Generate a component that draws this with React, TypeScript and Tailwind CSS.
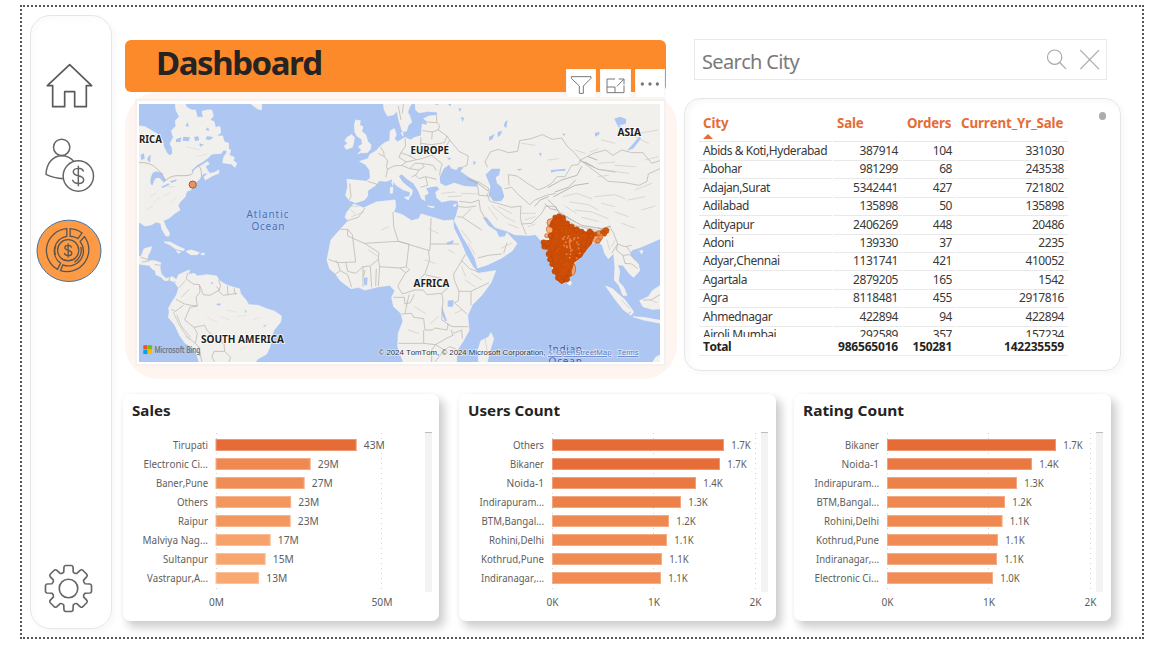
import React from "react";

type Bar = { label: string; value: string; width: number; color: string };
type Tick = { label: string; x: number };

const salesBars: Bar[] = [
  { label: "Tirupati", value: "43M", width: 141, color: "#e66c37" },
  { label: "Electronic Ci...", value: "29M", width: 95, color: "#ef8951" },
  { label: "Baner,Pune", value: "27M", width: 89, color: "#f08d55" },
  { label: "Others", value: "23M", width: 75.5, color: "#f3965f" },
  { label: "Raipur", value: "23M", width: 75, color: "#f3965f" },
  { label: "Malviya Nag...", value: "17M", width: 55, color: "#f7a26b" },
  { label: "Sultanpur", value: "15M", width: 50, color: "#f8a56e" },
  { label: "Vastrapur,A...", value: "13M", width: 43.5, color: "#f9a872" },
];

const userBars: Bar[] = [
  { label: "Others", value: "1.7K", width: 172, color: "#e66c37" },
  { label: "Bikaner", value: "1.7K", width: 168, color: "#e76e39" },
  { label: "Noida-1", value: "1.4K", width: 144, color: "#ea7943" },
  { label: "Indirapuram...", value: "1.3K", width: 129, color: "#ed814a" },
  { label: "BTM,Bangal...", value: "1.2K", width: 117, color: "#ef8850" },
  { label: "Rohini,Delhi", value: "1.1K", width: 115, color: "#ef8951" },
  { label: "Kothrud,Pune", value: "1.1K", width: 110, color: "#f08b54" },
  { label: "Indiranagar,...", value: "1.1K", width: 109, color: "#f08c54" },
];

const ratingBars: Bar[] = [
  { label: "Bikaner", value: "1.7K", width: 169, color: "#e66c37" },
  { label: "Noida-1", value: "1.4K", width: 145, color: "#ea7842" },
  { label: "Indirapuram...", value: "1.3K", width: 130, color: "#ed814a" },
  { label: "BTM,Bangal...", value: "1.2K", width: 118, color: "#ef8750" },
  { label: "Rohini,Delhi", value: "1.1K", width: 115.5, color: "#ef8951" },
  { label: "Kothrud,Pune", value: "1.1K", width: 111, color: "#f08b53" },
  { label: "Indiranagar,...", value: "1.1K", width: 110, color: "#f08b54" },
  { label: "Electronic Ci...", value: "1.0K", width: 106, color: "#f08d56" },
];

const labelWidths: Record<string, number> = {
  Tirupati: 35,
  "Electronic Ci...": 64.5,
  "Baner,Pune": 52,
  Others: 31,
  Raipur: 30,
  "Malviya Nag...": 65.5,
  Sultanpur: 45,
  "Vastrapur,A...": 61,
  Bikaner: 34,
  "Noida-1": 37.5,
  "Indirapuram...": 64.5,
  "BTM,Bangal...": 62.5,
  "Rohini,Delhi": 55,
  "Kothrud,Pune": 63,
  "Indiranagar,...": 63,
};

const rows = [
  ["Abids & Koti,Hyderabad", "387914", "104", "331030"],
  ["Abohar", "981299", "68", "243538"],
  ["Adajan,Surat", "5342441", "427", "721802"],
  ["Adilabad", "135898", "50", "135898"],
  ["Adityapur", "2406269", "448", "20486"],
  ["Adoni", "139330", "37", "2235"],
  ["Adyar,Chennai", "1131741", "421", "410052"],
  ["Agartala", "2879205", "165", "1542"],
  ["Agra", "8118481", "455", "2917816"],
  ["Ahmednagar", "422894", "94", "422894"],
  ["Airoli,Mumbai", "292589", "357", "157234"],
];

function HomeIcon() {
  return (
    <svg viewBox="90 183 147 141" className="h-[47px] w-[49px]" fill="none" stroke="#58595b" strokeWidth="5">
      <path d="M164 191 230 254H214V317H179V272H149V317H113V254H97Z" strokeLinejoin="round" />
    </svg>
  );
}

function CustomerIcon() {
  return (
    <svg viewBox="90 414 153 165" className="h-[55px] w-[51px]" fill="none" stroke="#666" strokeWidth="4.5">
      <circle cx="143" cy="442" r="24.5" />
      <path d="M149 536C128 535 112 531 96 523C97 489 118 467 143 467C157 467 170 473 179 484" strokeLinejoin="round" />
      <circle cx="193" cy="528" r="45.5" />
      <path d="M193 499V557M208 513C203 502 178 502 178 516C178 531 209 524 209 539C209 554 181 554 176 541" strokeLinecap="round" />
    </svg>
  );
}

function FinanceIcon() {
  return (
    <svg viewBox="64 657 199 191" className="h-[64px] w-[66px]" fill="none" stroke="#5b5650" strokeWidth="4">
      <ellipse cx="163.500" cy="752" rx="96.500" ry="92.500" fill="#fd9a45" stroke="#3b74ad" strokeWidth="3" />
      <path d="M157 685A67 66 0 0 0 129 808L138 789A45 45 0 0 1 157 708Z" />
      <path d="M167 685A67 66 0 0 1 203 698L190 715A45 45 0 0 0 167 708Z" />
      <path d="M210 709A67 66 0 0 1 138 812L145 794A45 45 0 0 0 197 724Z" />
      <circle cx="161" cy="750" r="32" />
      <path d="M123 765A41 41 0 0 1 124 735M199 740A41 41 0 0 1 180 786" />
      <path d="M161 731V771M171 741C168 734 151 733 151 743C151 753 172 748 172 759C172 769 153 769 150 760" strokeLinecap="round" />
    </svg>
  );
}

function GearIcon() {
  const pt = (r: number, deg: number) => {
    const a = (deg * Math.PI) / 180;
    return `${(Math.sin(a) * r).toFixed(1)} ${(-Math.cos(a) * r).toFixed(1)}`;
  };
  const d = Array.from({ length: 8 }, (_, i) => {
    const a = i * 45;
    return `${i ? "L" : "M"}${pt(52, a - 16)}L${pt(66, a - 12)}Q${pt(70, a - 11)} ${pt(70, a - 7)}L${pt(70, a + 7)}Q${pt(70, a + 11)} ${pt(66, a + 12)}L${pt(52, a + 16)}Q${pt(48, a + 22.5)} ${pt(52, a + 29)}`;
  }).join("");
  return (
    <svg viewBox="-74 -74 148 148" className="h-[49px] w-[49px]" fill="none" stroke="#666" strokeWidth="5" strokeLinejoin="round">
      <path d={d + "Z"} />
      <circle r="28" />
    </svg>
  );
}

function BarChart({ title, titleWidth, bars, ticks, className }: { title: string; titleWidth: number; bars: Bar[]; ticks: Tick[]; className: string }) {
  const start = ticks.length === 2 ? 92.6 : 93;
  return (
    <section className={className}>
      <svg viewBox="0 0 317 227" className="block h-[227px] w-[317px] [font-kerning:none]" fontFamily="'Noto Sans', sans-serif">
        <text x="9" y="22" fontSize="15" fontWeight="700" fill="#252423" textLength={titleWidth} lengthAdjust="spacingAndGlyphs">
          {title}
        </text>
        {[93, ...ticks.slice(1).map((t) => t.x - 0.5)].map((x) => (
          <path key={x} d={`M${Math.floor(x) + 0.5} 39V199`} stroke="#d2d2d2" strokeDasharray="1 4" />
        ))}
        {bars.map((b, i) => (
          <g key={b.label}>
            <text x="85" y={55 + i * 19} fontSize="11" fill="#605e5c" textAnchor="end" textLength={labelWidths[b.label]} lengthAdjust="spacingAndGlyphs">
              {b.label}
            </text>
            <rect x={start} y={45 + i * 19} width={b.width} height="12" fill={b.color} />
            <rect x={start + 0.5} y={45.5 + i * 19} width={b.width - 1} height="11" fill="none" stroke="#fff" strokeOpacity=".3" />
            <text x={start + 7.2 + b.width} y={55 + i * 19} fontSize="11" fill="#605e5c" textLength={b.value.endsWith("M") ? 21 : 19.5} lengthAdjust="spacingAndGlyphs">
              {b.value}
            </text>
          </g>
        ))}
        {ticks.map((t) => (
          <text key={t.label} x={t.x} y="212" fontSize="10.800" fill="#605e5c" textAnchor="middle" textLength={t.label.length === 3 ? 21 : t.label === "0M" ? 15 : 12} lengthAdjust="spacingAndGlyphs">
            {t.label}
          </text>
        ))}
        <rect x="302" y="39" width="7" height="159" fill="#f3f3f3" />
        <path d="M302 38.500H309" stroke="#bdbdbd" />
      </svg>
    </section>
  );
}

const indiaOutline =
  "M718 350 730 342 745 350 760 370 785 385 815 395 825 386 838 395 832 430 815 450 800 470 778 488 768 520 755 545 740 552 725 540 715 505 702 480 698 450 680 445 680 425 703 420 700 395 706 365Z";
const indiaEdge = [
  [720, 352], [732, 349], [743, 355], [757, 370], [770, 380], [785, 389], [800, 394], [824, 395], [829, 410], [821, 430], [805, 447], [793, 464], [782, 473], [762, 522], [755, 537], [740, 543], [729, 533], [720, 514], [711, 493], [706, 478], [702, 462], [688, 441], [686, 427], [698, 430], [706, 408], [712, 378],
];
const indiaEast = [
  [843, 402], [852, 399], [863, 396], [873, 392], [868, 402], [856, 412], [849, 422],
];

const fraction = (n: number) => n - Math.floor(n);
const indiaSpeckles = Array.from({ length: 420 }, (_, i) => ({
  x: 680 + fraction(Math.sin(i * 12.9898 + 1) * 43758.5453) * 158,
  y: 344 + fraction(Math.sin(i * 78.233 + 2) * 24634.6345) * 206,
}));

function WorldMap() {
  return (
    <svg viewBox="139 104 521 258" className="block h-[258px] w-[521px]" fontFamily="'Noto Sans', sans-serif">
      <defs>
        <clipPath id="india">
          <path d={indiaOutline} />
        </clipPath>
        <filter id="soft" x="-5%" y="-5%" width="110%" height="110%">
          <feGaussianBlur stdDeviation="1.200" />
        </filter>
      </defs>
      <rect x="139" y="104" width="521" height="258" fill="#adc7f2" />

      <g transform="translate(120 30) scale(.33333)">
        <g fill="#f1f0ed" stroke="#f6f5f2" strokeWidth="2" strokeLinejoin="round">
          <path d="M50 287 75 290 95 302 112 312 128 332 131 350 140 368 150 377 158 370 156 352 150 342 160 322 154 302 168 288 166 272 178 260 168 240 165 215H192L200 232 215 240 226 240 232 262 250 262 246 244 262 240 275 240 280 258 270 270 282 275 286 292 300 290 302 308 290 318 308 318 312 335 326 340 326 362 310 360 304 370 276 372 262 385 248 396 232 404 220 418 242 408 262 395 268 402 256 408 262 420 268 430 282 428 297 420 296 430 276 438 256 450 252 440 266 430 250 430 238 448 222 462 212 480 200 484 196 500 182 514 174 526 180 540 162 552 148 564 130 572 138 592 148 608 147 618 138 618 126 598 122 580 108 576 95 584 75 588 50 572Z" />
          <path d="M308 398 312 380 320 368 322 358 332 360 328 376 343 382 340 392 350 400 345 412 334 402Z" />
          <path d="M388 218 425 218 424 240 412 236Z" />
        </g>
        <g fill="#adc7f2">
          <path d="M98 430C105 420 118 425 130 432L122 446C108 438 102 448 98 466C88 466 90 444 98 430Z" />
          <path d="M118 428 132 442 138 450 132 458 122 448Z" />
          <path d="M124 470 146 460 148 464 128 474Z" />
          <path d="M150 454 170 448 168 454 154 458Z" />
          <path d="M62 374 72 370 74 386 64 390ZM84 380 92 374 90 398 82 390Z" />
          <path d="M190 320 210 322 206 334 188 332ZM222 322 234 318 238 330 226 334ZM262 318 280 322 270 330 256 328ZM168 328 184 322 182 336 168 336ZM238 340 252 344 240 350ZM196 288 204 276 206 290ZM256 300 264 292 268 302Z" />
        </g>
        <path d="M57 398C88 396 104 408 118 424C130 430 128 444 136 452C160 430 176 440 206 436C226 432 210 424 230 410C242 404 246 424 244 446" fill="none" stroke="#bcb3ad" strokeWidth="2.500" />
        <path d="M216 422 236 406 262 390" fill="none" stroke="#adc7f2" strokeWidth="4" />
        <g fill="none" stroke="#dddbd7" strokeWidth="2">
          <path d="M90 500 110 490M100 520 120 500M130 500 150 488M140 470 165 470M150 520 170 500M80 540 100 528M200 350 240 360M230 380 262 372" />
        </g>
      </g>

      <g transform="translate(120 200) scale(.33333)">
        <g fill="#f1f0ed" stroke="#f6f5f2" strokeWidth="2" strokeLinejoin="round">
          <path d="M50 172 64 168 72 146 95 140 90 156 84 166 80 182 102 182 122 188 120 206 124 222 138 236 158 230 170 240 162 246 150 240 134 242 122 230 108 224 106 212 96 206 88 196 68 194 50 190Z" />
          <path d="M132 126 150 126 172 138 194 148 190 152 166 146 152 136Z" />
          <path d="M198 154 214 150 238 158 232 164 212 164Z" />
          <path d="M170 152 182 156 174 160ZM244 160 254 160 252 164 244 164Z" />
          <path d="M170 238 176 224 208 210 206 224 222 220 232 228 262 224 290 228 296 240 318 254 340 262 358 266 362 282 378 300 386 314 414 316 440 326 464 334 484 348 482 366 462 390 454 412 450 440 440 462 412 478 400 495H240L232 468 222 446 196 430 180 408 164 374 145 352 148 336 146 324 156 306 170 284 176 264 166 250Z" />
        </g>
        <g fill="none" stroke="#c2bab4" strokeWidth="2.500" strokeLinejoin="round">
          <path d="M204 218 198 236 220 252 238 254 240 276 228 292 232 318 214 316 194 312 168 298M238 254 250 284 270 286 298 270 290 260M296 240 302 256 296 274 310 286M322 258 324 286M342 264 346 284M310 286 352 280M232 318 210 322 194 360 222 382 254 376 262 392 276 404 298 424 312 430 314 454 282 454 276 470 284 488M222 382 232 400 226 430 236 440 246 488M154 328 166 334 190 316M314 454 332 472 326 488M62 172 82 178M66 186 90 182M104 194 124 196M150 232 146 242" />
        </g>
        <g fill="none" stroke="#cfcdca" strokeWidth="3">
          <path d="M160 336 176 372 200 408 228 432M170 344 184 378 212 412M184 292 208 268M176 264 196 242M232 450 240 470M196 408 212 420" />
        </g>
        <g fill="none" stroke="#e0deda" strokeWidth="2">
          <path d="M260 352 292 366M300 350 330 360M352 350 380 346M342 400 370 420M380 400 400 420M400 360 420 352M360 450 380 440M320 330 350 336" />
        </g>
        <path d="M286 312 302 310 300 318ZM372 328 380 334 378 340ZM428 380 440 372 436 380ZM272 246 280 248 276 254Z" fill="#adc7f2" />
      </g>

      <g transform="translate(315 100) scale(.33333)">
        <g fill="#f1f0ed" stroke="#f6f5f2" strokeWidth="2" strokeLinejoin="round">
          <path d="M122 60 136 62 134 76 144 80 140 94 152 104 158 124 168 134 166 148 156 158 136 158 128 162 140 150 130 140 142 132 140 118 126 108 120 96 118 76Z" />
          <path d="M96 112 110 104 118 112 116 128 112 142 94 148 88 138 98 130 90 122Z" />
          <path d="M204 5 208 30 218 48 236 44 246 34 252 62 262 94 274 94 280 76 290 66 284 48 278 36 284 20 294 5Z" />
          <path d="M300 5 302 30 312 38 340 34 366 36 368 46 342 48 326 56 336 64 336 76 322 72 320 92 318 108 300 112 286 120 270 112 248 126 238 116 244 104 238 86 226 92 224 122 210 128 196 138 184 152 164 164 160 176 134 184 152 194 164 210 166 234 154 244 96 238 98 260 92 286 102 300 122 308 148 300 158 288 158 272 184 254 192 242 214 244 230 238 244 256 266 270 286 276 284 290 290 284 292 270 276 258 262 246 250 228 260 222 276 236 296 250 310 272 320 296 330 302 328 286 340 280 332 264 348 260 366 258 374 268 362 276 366 294 380 306 408 300 428 302 432 318 424 346 418 362 428 380 444 412 464 444 480 476 488 504 518 494 560 474 592 452 606 430 590 414 576 398 570 410 552 412 544 394 520 378 502 352 514 350 540 382 578 394 600 404 640 406 662 404 676 420 688 424 700 440 704 480 722 530 740 552 755 545 770 500 800 465 832 430 850 425 862 436 870 462 880 476 896 460 900 500 898 540 912 556 924 586 936 586 926 562 910 544 914 514 908 494 924 496 944 522 956 532 974 512 970 492 944 466 950 450 976 442 1000 432 1045 412V5Z" />
          <path d="M90 352 96 336 116 312 146 324 184 306 240 300 242 320 236 336 262 344 290 362 312 356 318 342 346 350 386 362 414 360 416 384 438 428 452 462 474 500 490 520 542 512 528 548 500 586 472 614 458 646 462 692 444 724 426 752 424 795H268L248 740 250 700 264 664 258 640 236 620 230 592 240 572 224 556 190 560 150 570 130 562 108 566 76 542 60 520 44 506 36 480 42 450 48 420 76 388 100 362Z" />
          <path d="M488 752 498 722 520 712 528 698 536 716 526 748 514 795H492Z" />
          <path d="M872 558 892 566 930 600 956 636 948 646 926 630 900 598Z" />
          <path d="M954 650 984 652 1040 662V670L986 660Z" />
          <path d="M974 602 1000 590 1012 572 1045 550V626L1012 628 984 620Z" />
          <path d="M758 536 770 548 766 556 758 552ZM974 452 984 452 980 462ZM268 292 284 290 280 300ZM226 262 234 262 232 280 226 280ZM230 246 234 244 234 256ZM338 318 358 320 354 324ZM414 316 424 312 420 320ZM1008 795 1022 772 1040 762V795ZM258 98 264 98 264 108Z" />
        </g>
        <g fill="#adc7f2">
          <path d="M376 250 374 232 386 206 402 194 410 206 424 210 432 200 444 204 436 214 462 232 488 246 488 260 448 258 418 248 392 258Z" />
          <path d="M512 224 530 206 556 206 552 226 542 232 546 250 560 262 568 290 558 304 536 304 522 286 526 258Z" />
          <path d="M708 210 752 206 750 212 722 214 708 218ZM605 208 622 206 614 212ZM672 158 680 160 676 170ZM548 96 562 92 556 106 548 112ZM570 66 578 60 574 84 566 78ZM522 110 540 102 532 118 522 122ZM438 50 448 54 442 66ZM430 24 440 26 434 36ZM742 100 752 102 746 108ZM840 98 854 96 852 104 840 110ZM898 56 916 50 934 58 932 72 912 76 924 84 916 90 904 70ZM936 152 962 122 974 108 978 116 954 146ZM396 172 410 176 402 180ZM474 184 484 186 476 196Z" />
          <path d="M398 602 416 600 414 620 398 620ZM380 620 388 640 396 662 390 664 380 640ZM410 676 418 704 422 720 416 700ZM146 534 158 532 156 556 148 556ZM394 428 416 420 414 430 398 434Z" />
          <path d="M354 10 366 5 374 5 368 16ZM394 5 410 5 406 20Z" />
        </g>
        <g fill="none" stroke="#c0b9b3" strokeWidth="2.400" strokeLinejoin="round">
          <path d="M104 250 108 290 102 300M158 244 190 254M196 140 206 156 208 170 218 182 214 200 218 208 212 232M270 114 272 138 258 158 284 168 300 156 316 150 318 112M208 170 190 160M218 208 236 198 260 196 274 186 252 172 258 158M260 196 284 206 300 190 320 190 328 200 312 210 284 206M274 186 300 180 320 176 350 166 382 192 376 208 374 226M318 130 350 134 388 128 396 108 370 90 352 96 322 92M352 96 350 118M336 66 366 68 374 76 370 90M396 108 404 120 432 154 460 168 456 196 436 204M350 166 388 150 404 120M300 224 312 236 332 230 364 238M312 210 302 226 290 230M332 230 338 256 316 262M320 190 354 196 364 212M366 68 364 46M262 40 266 5M250 18 258 60M284 168 302 178" />
          <path d="M518 202 510 186 526 156 550 148 580 158 608 154 614 122 648 116 682 104 712 118 740 114 756 138 778 158 796 180 790 194 770 196 750 230 726 230 710 250 690 262M796 180 836 160 872 150 894 166 920 150 950 158 984 158 1010 190 1035 182M796 180 832 208 880 244 930 248 972 256 996 244 1000 222 1035 206M582 256 580 224 606 228 640 252 670 270 690 262M568 266 590 262 606 280 644 314 660 300 694 286 722 280M460 236 492 246 520 264 524 290M488 260 492 286 520 288M432 304 470 308 492 300 496 330 516 364M432 320 456 322 484 318M426 350 442 352 468 326M442 352 500 390M488 474 520 466 560 462M576 428 566 460M516 280 524 304 540 308 590 322 618 318 616 350 620 372 634 404M620 372 650 370 680 340 692 318 722 320M722 320 736 346 780 376 850 392 884 380 896 400 908 432 890 460M908 432 930 440 950 436M908 432 904 450 924 466 930 490 950 492 968 506M924 466 944 464M936 440 960 480" />
          <path d="M76 388 98 388V408L148 430 192 458M98 362 130 352 150 324M98 388 112 404 122 486 68 488 62 480M148 430 250 424 344 452 346 432 348 354M234 336 236 380 250 424M346 432H432M340 452 344 480 330 520 296 560M250 424 282 432 274 500 254 504 194 500 190 478 192 458M190 478 166 498 144 500 122 520 98 514 92 486M40 478 68 488 76 512 58 524M76 512 98 524 110 562M144 500V560M166 500 170 562M184 506 182 558M194 500 190 558M254 504 272 518 284 510 274 500M272 518 248 558 262 582 300 570 324 570 336 584 380 580 400 562M400 562 380 536 330 524M452 462 432 496 416 522 418 540 432 574 468 574 522 548M468 574 468 616M432 574 430 602 418 608 456 642M380 580 384 600 380 660 400 672 396 690 360 684 352 690 330 690 326 656 296 652 290 640 260 642M236 592 268 592 270 612 286 608 298 582M326 690 326 730H250M326 730 362 734 396 714 414 706 408 690M396 672 414 680 460 680M362 734 388 750 404 740 424 748M362 734 350 750V786M388 750 372 770 360 786M416 700 440 690 442 716M150 510 146 530M282 584 270 640M438 480 464 506 490 516" />
          <path d="M984 600 1008 600 1035 584M940 640 948 636" />
        </g>
        <g filter="url(#soft)" fill="none" stroke="#a9a7a4" strokeWidth="3" strokeLinecap="round" opacity=".75">
          <path d="M796 182 850 208 900 216M700 262 740 240 786 226 800 200M716 290 780 256 820 250M700 300 720 320 740 344 800 376 860 386 886 378M690 312 706 326 724 330M782 240 760 262 720 276M456 236 492 252 518 272M700 290 676 300 660 318M740 340 780 366M850 384 884 390M820 170 846 180M810 186 836 200" />
        </g>
        <g fill="none" stroke="#cfcdca" strokeWidth="2.200" strokeLinecap="round">
          <path d="M744 290 784 280 830 296M764 306 820 314 850 330M780 330 830 336 880 356M800 352 850 364M750 318 784 340M840 290 900 284 930 296M860 310 900 320M900 336 940 350M920 370 960 384M940 300 990 290M960 270 1010 250M980 330 1020 318M990 180 1030 170M850 190 900 186M900 196 960 200M870 210 940 220M850 230 880 226M530 316 570 350 600 366M550 320 590 340M520 322 548 360M580 372 610 384M620 340 660 340M630 360 660 350M640 380 660 372M380 280 420 276M400 290 440 288M440 280 490 282M108 330 120 340M110 350 146 336M440 500 452 530M450 540 480 560M470 520 500 540M420 640 440 630M100 320 130 318M440 392 470 430M460 430 480 462M560 444 590 430M780 150 810 160M826 156 850 146M860 120 900 130M970 100 1030 90M960 110 1000 130M700 180 730 176M900 420 890 440M876 420 884 450M920 600 944 626M1006 600 1026 608M510 716 516 750M620 130 660 136M340 386 370 400M200 390 220 380M160 450 190 470M300 620 330 640M280 690 310 700M346 670 370 650M400 450 420 460M330 480 360 490" />
        </g>
        <g fill="#f0873d" fillOpacity=".6" stroke="#c4500f" strokeWidth="2">
          <ellipse cx="768" cy="507" rx="14" ry="21" fill="#e9a576" fillOpacity="1" />
          <circle cx="708" cy="368" r="12" />
          <circle cx="705" cy="388" r="11" fill="#f7b07c" fillOpacity="1" />
          <circle cx="695" cy="407" r="6" />
          <circle cx="705" cy="479" r="7" />
          <circle cx="846" cy="416" r="13" />
        </g>
        <path d={indiaOutline} fill="#cb4c05" />
        <g fill="#cb4c05" stroke="#b84404" strokeWidth="1.500">
          {indiaEdge.map(([x, y], i) => (
            <circle key={i} cx={x} cy={y} r={7 + (i % 3)} />
          ))}
          {indiaEast.map(([x, y], i) => (
            <circle key={i} cx={x} cy={y} r={i === 3 ? 9 : 7} fill={i > 4 || i === 1 ? "#ef8b4c" : "#d35509"} />
          ))}
        </g>
        <circle cx="704" cy="390" r="8" fill="#f7b07c" />
        <g clipPath="url(#india)">
          {indiaSpeckles.map(({ x, y }, i) => {
            const light = x > 742 && x < 800 && y > 408 && y < 476 && i % 2 === 0;
            return <circle key={i} cx={x} cy={y} r={light ? 3 : 1.3} fill={light ? "#f08a4b" : "#ef6d20"} fillOpacity={light ? 0.85 : 0.75} />;
          })}
        </g>
      </g>

      <circle cx="192.700" cy="184.600" r="3.600" fill="#ea9360" stroke="#b05a2b" />

      <g fontSize="11.200" fontWeight="700" fill="#1f1f1f" stroke="#fff" strokeWidth="2" strokeOpacity=".7" paintOrder="stroke">
        <text x="139" y="143" textLength="23" lengthAdjust="spacingAndGlyphs">RICA</text>
        <text x="410.500" y="153.500" textLength="38.500" lengthAdjust="spacingAndGlyphs">EUROPE</text>
        <text x="617.500" y="136" textLength="23.500" lengthAdjust="spacingAndGlyphs">ASIA</text>
        <text x="413.500" y="286.800" textLength="36" lengthAdjust="spacingAndGlyphs">AFRICA</text>
        <text x="201" y="343" textLength="83" lengthAdjust="spacingAndGlyphs">SOUTH AMERICA</text>
      </g>
      <g fontSize="10" fill="#4c6cb3" stroke="#c6d8f7" strokeWidth="1" strokeOpacity=".6" paintOrder="stroke">
        <text x="246.500" y="218" textLength="42">Atlantic</text>
        <text x="251.500" y="229.500" textLength="33">Ocean</text>
        <text x="548.500" y="353" textLength="33.500" fill="#3e5aa8">Indian</text>
        <text x="548.500" y="364.500" textLength="33.500" fill="#3e5aa8">Ocean</text>
      </g>
      <path d="M143.300 345.200h4.200v4.200h-4.200z" fill="#f25022" />
      <path d="M148 345.200h4.200v4.200H148z" fill="#7fba00" />
      <path d="M143.300 349.900h4.200v4.200h-4.200z" fill="#00a4ef" />
      <path d="M148 349.900h4.200v4.200H148z" fill="#ffb900" />
      <text x="154.500" y="353.200" fontSize="8" fill="#6d7078" stroke="#6d7078" strokeWidth=".2" textLength="46" lengthAdjust="spacingAndGlyphs">
        Microsoft Bing
      </text>
      <g fontFamily="'Liberation Sans', sans-serif" fontSize="8" stroke="#fff" strokeOpacity=".55" strokeWidth="1.600" paintOrder="stroke">
        <text x="378.500" y="355" fill="#333" textLength="167" lengthAdjust="spacingAndGlyphs">© 2024 TomTom, © 2024 Microsoft Corporation,</text>
        <text x="548" y="355" fill="#5c78c2" textDecoration="underline" textLength="63.500" lengthAdjust="spacingAndGlyphs">© OpenStreetMap</text>
        <text x="617.500" y="355" fill="#5c78c2" textDecoration="underline" textLength="21" lengthAdjust="spacingAndGlyphs">Terms</text>
      </g>
    </svg>
  );
}

function VisualToolbar() {
  return (
    <div className="absolute left-[441px] top-[29px] flex gap-1">
      <span className="h-[29px] w-[30px] border border-[#f6f6f6] bg-white">
        <svg viewBox="501 120 84 81" className="h-[27px] w-[28px]" fill="none" stroke="#777" strokeWidth="3">
          <path d="M514 140H573V145L550 168V190H538V168L514 145Z" />
        </svg>
      </span>
      <span className="h-[29px] w-[31px] border border-[#f6f6f6] bg-white">
        <svg viewBox="603 120 87 81" className="h-[27px] w-[29px]" fill="none" stroke="#777" strokeWidth="3">
          <path d="M645 147H621V188H672V166M621 171H645V188M651 169 671 148M656 147H672V163" />
        </svg>
      </span>
      <span className="h-[29px] w-[30px] border border-[#f6f6f6] bg-white">
        <svg viewBox="708 120 84 81" className="h-[27px] w-[28px]" fill="#777">
          <circle cx="727" cy="162" r="5" />
          <circle cx="750" cy="162" r="5" />
          <circle cx="772" cy="162" r="5" />
        </svg>
      </span>
    </div>
  );
}

function CityTable() {
  const cols = "grid grid-cols-[133px_69px_53px_111px] gap-x-px";
  return (
    <section className="mt-[18px] h-[273px] w-[437px] rounded-[16px] border border-[#e6e6e6] pl-[14px] shadow-[inset_3px_3px_6px_rgba(0,0,0,0.03),3px_3px_6px_rgba(0,0,0,0.03)]">
      <div className="flex">
        <div className="w-[369px]">
          <div className={`${cols} h-[43px] pt-[15px] text-[13.3px] leading-[18px] font-bold text-[#e66c37]`}>
            <div className="border-b border-[#e6e6e6] pl-1 tracking-[-0.1px]">
              City
              <svg viewBox="0 0 10 5" className="mt-[2px] block h-[5px] w-[10px]" fill="#e66c37">
                <path d="M5 0 10 5H0Z" />
              </svg>
            </div>
            <div className="border-b border-[#e6e6e6] pl-1 tracking-[-0.2px]">Sale</div>
            <div className="border-b border-[#e6e6e6] pl-1 tracking-[-0.2px]">Orders</div>
            <div className="border-b border-[#e6e6e6] pl-1 tracking-[-0.1px]">Current_Yr_Sale</div>
          </div>
          <div className="h-[195px] overflow-hidden text-[12px] leading-[18px] text-[#3a3938]">
            {rows.map((r) => (
              <div key={r[0]} className={`${cols} h-[18.400px]`}>
                <div className="border-b border-[#e9e9e9] pl-1 tracking-[-0.45px] whitespace-nowrap">{r[0]}</div>
                {r.slice(1).map((v, i) => (
                  <div key={i} className="border-b border-[#e9e9e9] pr-1 text-right tracking-[-0.45px]">
                    {v}
                  </div>
                ))}
              </div>
            ))}
          </div>
          <div className={`${cols} h-[19px] border-b border-[#ececec] text-[12px] leading-[20px] font-bold text-[#252423]`}>
            <div className="pl-1 tracking-[-0.45px]">Total</div>
            <div className="pr-1 text-right tracking-[-0.2px]">986565016</div>
            <div className="pr-1 text-right tracking-[-0.3px]">150281</div>
            <div className="pr-1 text-right tracking-[-0.2px]">142235559</div>
          </div>
        </div>
        <div className="mt-[13px] ml-[31px] h-[8px] w-[7px] rounded-full bg-[#adadad]" />
      </div>
    </section>
  );
}

const card = "h-[227px] w-[317px] rounded-[7px] bg-white shadow-[5px_6px_9px_1px_rgba(0,0,0,0.18),0_0_4px_rgba(0,0,0,0.04)]";
const cardFirst = "h-[227px] w-[316px] rounded-[7px] bg-white shadow-[5px_6px_9px_1px_rgba(0,0,0,0.18),0_0_4px_rgba(0,0,0,0.04)]";

export default function App() {
  const kTicks = [
    { label: "0K", x: 93.5 },
    { label: "1K", x: 195 },
    { label: "2K", x: 296.500 },
  ];
  return (
    <div className="h-[655px] w-[1152px] overflow-hidden bg-white pt-[5px] pl-[20px] font-['Noto_Sans',sans-serif] [font-kerning:none]">
      <div className="flex h-[634px] w-[1124px] border-2 border-dotted border-[#555] pt-[8px] pl-[8px]">
        <nav className="flex h-[614px] w-[82px] shrink-0 flex-col items-center rounded-[20px] border border-[#e6e6e6] pt-[46px] pr-[4px] shadow-[inset_3px_3px_6px_rgba(0,0,0,0.02),3px_3px_6px_rgba(0,0,0,0.03)]">
          <HomeIcon />
          <div className="mt-[29px] ml-[1px]">
            <CustomerIcon />
          </div>
          <div className="mt-[26px]">
            <FinanceIcon />
          </div>
          <div className="mt-auto mr-[1px] mb-[15px]">
            <GearIcon />
          </div>
        </nav>
        <main className="pt-[25px] pl-[11px]">
          <div className="flex gap-[7px] pl-[2px]">
            <div className="relative w-[552px]">
              <header className="h-[52px] w-[541px] rounded-[6px] bg-[#fc8a2a] pl-[31px]">
                <h1 className="text-[33px] leading-[46px] font-bold tracking-[-1.45px] text-[#252423]">Dashboard</h1>
              </header>
              <div className="h-[287px] rounded-[34px] bg-[#fef4f0] pt-[7px] pl-[10px]">
                <div className="h-[267px] w-[531px] border-2 border-[#f3f2f1] bg-white pt-[3px] pl-[2px]">
                  <WorldMap />
                </div>
              </div>
              <VisualToolbar />
            </div>
            <div>
              <div className="-mt-px ml-[10px] flex h-[41px] w-[413px] items-center border border-[#e9e9e9] pr-[6px] pl-[7px]">
                <span className="pt-[5px] text-[20px] tracking-[-0.65px] text-[#7a7a7a]">Search City</span>
                <svg viewBox="1083 57 162 62" className="ml-auto h-[21px] w-[54px]" fill="none" stroke="#a8a8a8" strokeWidth="3.500">
                  <circle cx="1109" cy="81" r="21.500" />
                  <path d="M1124 97 1143 116M1186 60 1242 117M1242 60 1186 117" />
                </svg>
              </div>
              <CityTable />
            </div>
          </div>
          <div className="mt-[15px] flex">
            <BarChart
              className={cardFirst}
              title="Sales"
              titleWidth={38.5}
              bars={salesBars}
              ticks={[
                { label: "0M", x: 93.5 },
                { label: "50M", x: 259 },
              ]}
            />
            <div className="ml-[20px]">
              <BarChart className={card} title="Users Count" titleWidth={92} bars={userBars} ticks={kTicks} />
            </div>
            <div className="ml-[18px]">
              <BarChart className={card} title="Rating Count" titleWidth={101} bars={ratingBars} ticks={kTicks} />
            </div>
          </div>
        </main>
      </div>
    </div>
  );
}
